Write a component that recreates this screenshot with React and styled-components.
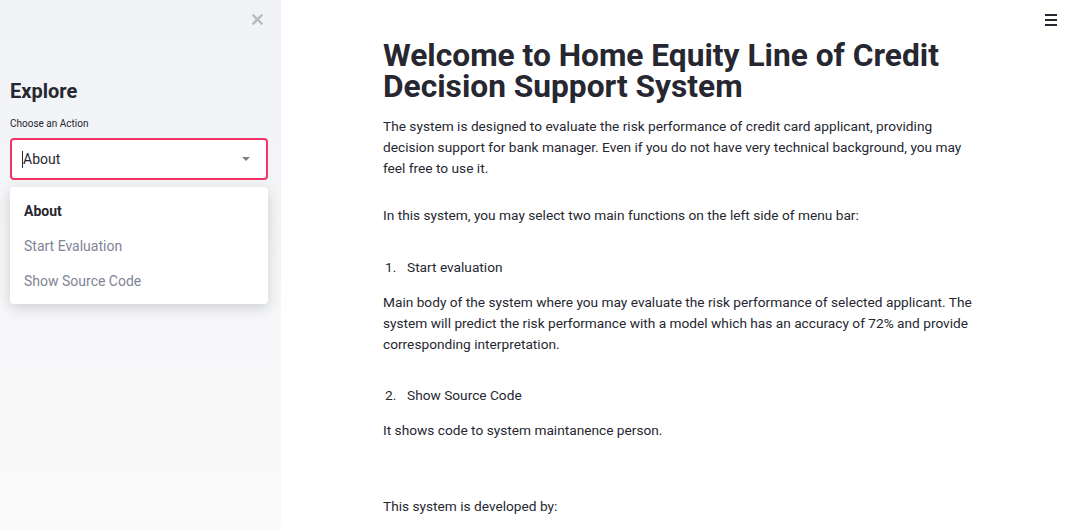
import React from 'react';
import styled, { createGlobalStyle } from 'styled-components';

const GlobalStyle = createGlobalStyle`
  html, body {
    margin: 0;
    padding: 0;
    height: 100%;
    overflow: hidden;
  }
  body {
    font-family: Roboto, "Noto Sans", sans-serif;
    color: #262730;
    background: #fff;
  }
  #root {
    height: 100%;
  }
`;

const Shell = styled.div`
  display: flex;
  height: 530px;
`;

const Sidebar = styled.aside`
  position: relative;
  width: 281px;
  flex-shrink: 0;
  background-image: linear-gradient(180deg, #f0f2f6 0%, #fafafa 100%);
  padding: 0 13px 0 10px;
  box-sizing: border-box;
`;

const CloseButton = styled.div`
  display: flex;
  justify-content: flex-end;
  padding: 14px 5px 0 0;
  height: 12px;
`;

const SideTitle = styled.h2`
  margin: 53px 0 0;
  font-size: 20px;
  font-weight: 700;
  line-height: 24px;
  color: #262730;
`;

const FieldLabel = styled.label`
  display: block;
  margin-top: 14px;
  font-size: 10px;
  line-height: 14px;
  color: #262730;
`;

const SelectBox = styled.div`
  margin-top: 7px;
  height: 42px;
  box-sizing: border-box;
  background: #fff;
  border: 2px solid #f63366;
  border-radius: 4px;
  display: flex;
  align-items: center;
  padding: 0 16px 0 10px;
  font-size: 14px;
`;

const Caret = styled.span`
  width: 1px;
  height: 17px;
  background: #262730;
`;

const SelectValue = styled.span`
  flex: 1;
  color: #262730;
`;

const Arrow = styled.span`
  width: 0;
  height: 0;
  border-left: 4px solid transparent;
  border-right: 4px solid transparent;
  border-top: 4px solid #7d808d;
`;

const Menu = styled.ul`
  position: absolute;
  left: 10px;
  top: 187px;
  width: 258px;
  margin: 0;
  padding: 6px 0;
  list-style: none;
  background: #fff;
  border-radius: 4px;
  box-shadow: 0 4px 14px rgba(0, 0, 0, 0.16);
  box-sizing: border-box;
`;

const MenuItem = styled.li`
  height: 35px;
  display: flex;
  align-items: center;
  padding-left: 14px;
  font-size: 14px;
  font-weight: ${p => (p.$active ? 700 : 400)};
  color: ${p => (p.$active ? '#262730' : '#808495')};
`;

const Main = styled.main`
  position: relative;
  flex: 1;
  padding: 40px 0 0 102px;
`;

const Hamburger = styled.div`
  position: absolute;
  top: 14px;
  right: 16px;
  width: 12px;
  display: flex;
  flex-direction: column;
  gap: 3px;
  span {
    display: block;
    height: 2px;
    background: #262730;
  }
`;

const Content = styled.div`
  width: 600px;
`;

const Title = styled.h1`
  margin: 0 0 14px;
  font-size: 31.7px;
  line-height: 31px;
  font-weight: 700;
  color: #262730;
`;

const Para = styled.p`
  margin: 0 0 ${p => p.$gap || 14}px;
  font-size: 13.7px;
  line-height: 21px;
`;

const ListItem = styled.div`
  display: flex;
  margin: 0 0 14px;
  font-size: 13.7px;
  line-height: 21px;
  span:first-child {
    width: 24px;
    padding-left: 2px;
    box-sizing: border-box;
  }
`;

function CloseIcon() {
  return (
    <svg width="11" height="11" viewBox="0 0 11 11">
      <path d="M1.5 1.5 L9.5 9.5 M9.5 1.5 L1.5 9.5" stroke="#b8bac1" strokeWidth="2.4" strokeLinecap="square" />
    </svg>
  );
}

export default function App() {
  return (
    <>
      <GlobalStyle />
      <Shell>
        <Sidebar>
          <CloseButton>
            <CloseIcon />
          </CloseButton>
          <SideTitle>Explore</SideTitle>
          <FieldLabel>Choose an Action</FieldLabel>
          <SelectBox>
            <Caret />
            <SelectValue>About</SelectValue>
            <Arrow />
          </SelectBox>
          <Menu>
            <MenuItem $active>About</MenuItem>
            <MenuItem>Start Evaluation</MenuItem>
            <MenuItem>Show Source Code</MenuItem>
          </Menu>
        </Sidebar>
        <Main>
          <Hamburger>
            <span />
            <span />
            <span />
          </Hamburger>
          <Content>
            <Title>Welcome to Home Equity Line of Credit Decision Support System</Title>
            <Para $gap={26}>
              The system is designed to evaluate the risk performance of credit card applicant, providing
              decision support for bank manager. Even if you do not have very technical background, you may
              feel free to use it.
            </Para>
            <Para $gap={31}>
              In this system, you may select two main functions on the left side of menu bar:
            </Para>
            <ListItem>
              <span>1.</span>
              <span>Start evaluation</span>
            </ListItem>
            <Para $gap={30}>
              Main body of the system where you may evaluate the risk performance of selected applicant. The
              system will predict the risk performance with a model which has an accuracy of 72% and provide
              corresponding interpretation.
            </Para>
            <ListItem>
              <span>2.</span>
              <span>Show Source Code</span>
            </ListItem>
            <Para $gap={55}>It shows code to system maintanence person.</Para>
            <Para>This system is developed by:</Para>
          </Content>
        </Main>
      </Shell>
    </>
  );
}
